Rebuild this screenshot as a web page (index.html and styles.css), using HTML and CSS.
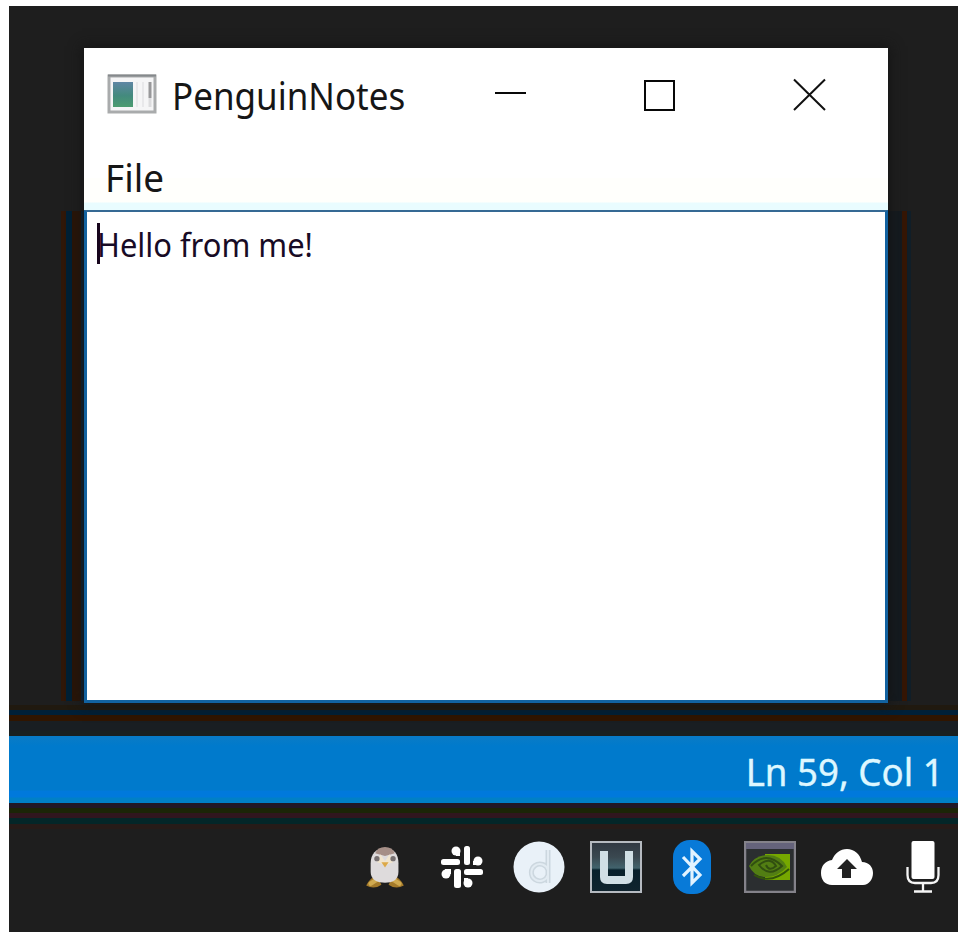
FILE: index.html
```html
<!DOCTYPE html>
<html lang="en">
<head>
<meta charset="utf-8">
<title>PenguinNotes</title>
<link rel="stylesheet" href="styles.css">
</head>
<body>
<main class="desktop">
  <section class="stage">
    <div class="window">
      <header class="titlebar">
        <svg class="app-icon" width="50" height="40" viewBox="0 0 50 40">
          <defs><linearGradient id="pane" x1="0" y1="0" x2="0" y2="1"><stop offset="0" stop-color="#5f86a4"/><stop offset=".55" stop-color="#438a7d"/><stop offset="1" stop-color="#4c9c70"/></linearGradient></defs>
          <rect x="2" y="2" width="46" height="36" fill="#f5f5f6" stroke="#a9abac" stroke-width="3"/>
          <path d="M1 1.500H49" stroke="#85898c" stroke-width="2"/>
          <rect x="6" y="8" width="20" height="25" fill="url(#pane)"/>
          <path d="M30 8V33M36 8V33" stroke="#e8e8ea" stroke-width="2"/>
          <path d="M43 8V24" stroke="#98989a" stroke-width="3"/>
          <path d="M43 24V33" stroke="#dcdcde" stroke-width="3"/>
        </svg>
        <h1 class="title"><span class="title-text">PenguinNotes</span></h1>
        <div class="controls">
          <svg width="34" height="34" viewBox="0 0 34 34"><path d="M1 15H32" stroke="#080808" stroke-width="2"/></svg>
          <svg width="34" height="34" viewBox="0 0 34 34"><rect x="2" y="3" width="29" height="29" fill="none" stroke="#080808" stroke-width="2"/></svg>
          <svg width="34" height="34" viewBox="0 0 34 34"><path d="M2 1.500L33 32M33 1.500L2 32" stroke="#111" stroke-width="2"/></svg>
        </div>
      </header>
      <nav class="menubar"><span class="menu-item">File</span></nav>
      <div class="editor"><i class="caret"></i><span class="note">Hello from me!</span></div>
    </div>
  </section>
  <div class="statusbar"><span class="position">Ln 59, Col 1</span></div>
  <footer class="tray">
    <svg class="penguin" width="40" height="43" viewBox="0 0 44 48">
      <path d="M1 43Q6 33 13 32L18 42Q10 48 1 43ZM43 43Q38 33 31 32L26 42Q34 48 43 43Z" fill="#a47a2a"/>
      <path d="M6 41L12 37M32 37L38 41" stroke="#d0aa50" stroke-width="5" stroke-linecap="round"/>
      <path d="M6 18C6 8 12 1 22 1S37 8 37 18V28C37 37 30 40 22 40S6 37 6 28Z" fill="#dedbdc"/>
      <path d="M11 7Q14 0 22 0T33 7L22 10Z" fill="#a68f87"/>
      <path d="M17 8L22 16L27 8L31 17L23 20L13 17Z" fill="#f1e5ce"/>
      <circle cx="13" cy="13" r="3" fill="#777071"/><circle cx="31" cy="13" r="3" fill="#777071"/>
      <path d="M18 17H26L22 23Z" fill="#dca948"/>
    </svg>
    <svg class="slack" width="42" height="42" viewBox="0 0 42 42" fill="#fff">
      <circle cx="15" cy="5" r="4.500"/><rect x="15" y="3" width="4" height="7"/><rect x="23" y="0" width="6" height="19" rx="2.500"/>
      <rect x="0" y="13" width="19" height="6" rx="2.500"/><circle cx="37" cy="15" r="4.500"/><rect x="32" y="15" width="6" height="4"/>
      <circle cx="5" cy="28" r="4.500"/><rect x="4" y="23" width="6" height="5"/><rect x="23" y="23" width="19" height="6" rx="2.500"/>
      <rect x="13" y="23" width="7" height="19" rx="2.500"/><circle cx="27" cy="37" r="4.500"/><rect x="23" y="32" width="4" height="5"/>
    </svg>
    <svg class="disc" width="52" height="52" viewBox="0 0 52 52"><circle cx="26" cy="26" r="25.500" fill="#e9f1f8"/><path d="M35 9V42M35 34A8.500 8.500 0 1 1 35 29" fill="none" stroke="#ccd7df" stroke-width="5"/><path d="M35 9V42M35 34A8.500 8.500 0 1 1 35 29" fill="none" stroke="#e2ebf2" stroke-width="2"/></svg>
    <svg class="utool" width="52" height="52" viewBox="0 0 52 52">
      <defs><linearGradient id="steel" x1="0" y1="0" x2="0" y2="1"><stop offset="0" stop-color="#303842"/><stop offset=".3" stop-color="#3a4850"/><stop offset=".52" stop-color="#42636d"/><stop offset=".56" stop-color="#07202b"/><stop offset="1" stop-color="#10242e"/></linearGradient></defs>
      <rect x="1" y="1" width="50" height="50" fill="url(#steel)" stroke="#b5bac0" stroke-width="2"/>
      <path d="M14 10V36Q14 39 17 39H36Q39 39 39 36V10" fill="none" stroke="#d0dfe5" stroke-width="8"/>
    </svg>
    <svg class="bluetooth" width="38" height="54" viewBox="0 0 38 54"><rect width="38" height="54" rx="17" fill="#087ad8"/><path d="M10 17L27 35L19 43V11L27 19L10 36" fill="none" stroke="#e2f3ff" stroke-width="3.200"/></svg>
    <svg class="nvidia" width="52" height="52" viewBox="0 0 52 52">
      <rect x="1" y="1" width="50" height="50" fill="#2b2e30" stroke="#84828a" stroke-width="2.500"/><path d="M2 5H50" stroke="#65637b" stroke-width="6"/>
      <rect x="21" y="13" width="25" height="26" fill="#76a800"/>
      <path d="M5 25Q11 14 24 14T43 26Q34 36 22 36T5 25Z" fill="#527e13"/>
      <path d="M7 25Q22 9 38 25Q25 37 15 24Q26 15 32 25Q25 31 22 24" fill="none" stroke="#314f10" stroke-width="2"/>
      <path d="M10 34Q27 44 45 28" fill="none" stroke="#315409" stroke-width="2"/>
    </svg>
    <svg class="cloud" width="52" height="36" viewBox="0 0 52 36"><path d="M11 36C4 36 0 31 0 24S4 12 11 11C14 4 19 0 26 0S39 5 41 13C48 13 52 18 52 24S48 36 42 36Z" fill="#fff"/><path d="M26 10L36 20H30V29H21V20H16Z" fill="#222"/></svg>
    <svg class="mic" width="34" height="52" viewBox="0 0 34 52"><rect x="5.500" y="0" width="23" height="38" rx="2" fill="#fff"/><path d="M1.500 26V34Q1.500 42 9 42H25Q32.500 42 32.500 34V26M17 42V50M8 50.500H26" fill="none" stroke="#f5f5f5" stroke-width="2.300"/></svg>
  </footer>
</main>
</body>
</html>
```
FILE: styles.css
```css
* { box-sizing: border-box; }
body { margin: 0; padding: 6px 9px 5px; background: #fff; font-family: "Noto Sans", sans-serif; }
svg { display: block; flex: none; }
.desktop { height: 926px; background: #1e1e1e; overflow: hidden; }
.stage {
  height: 730px; padding: 42px 70px 0 75px;
  background:
    linear-gradient(#20190f 0 5px, #002038 5px 10px, #301500 10px 16px, #191e22 16px 26px, #192020 26px 31px) 0 699px / 100% 31px no-repeat,
    linear-gradient(90deg, #301708 0 5px, #002035 5px 11px, #2a1507 11px 20px, #07243d 20px) 52px 205px / 24px 490px no-repeat,
    linear-gradient(90deg, #141a1f 0 15px, #351605 15px 20px, #101e28 20px 24px) 878px 205px / 24px 490px no-repeat,
    #1e1e1e;
}
.window { width: 804px; height: 655px; display: flex; flex-direction: column; background: #fff; box-shadow: 0 0 12px 2px #151515; }
.titlebar { height: 98px; display: flex; align-items: center; padding: 0 60px 6px 23px; }
.title { margin: 0 0 0 15px; width: 297px; font-size: 39px; line-height: 54px; font-weight: 400; color: #161616; padding-top: 1px; }
.title-text, .menu-item, .note, .position { display: inline-block; white-space: nowrap; transform-origin: left center; }
.title-text { transform: scaleX(.897); }
.controls { display: flex; gap: 115px; margin: 1px 0 0 25px; }
.menubar { height: 64px; padding: 4px 0 0 21px; font-size: 38px; line-height: 54px; color: #161616; background: linear-gradient(#fff 0 32px, #fffffc 32px 56px, #e9fcff 57px); }
.menu-item { transform: scaleX(.97); }
.editor { flex: 1; display: flex; border: 3px solid #1262a0; border-top: 2px solid #356994; padding: 11px 0 0 10px; background: #fff; }
.caret { width: 3px; height: 41px; background: #17051d; }
.note { margin-left: -3px; height: 41px; font-size: 32px; line-height: 43px; color: #180b25; transform: scaleX(.965); }
.statusbar { height: 67px; background: linear-gradient(#077bc7 0 3px, #007acc 10px 54px, #0079dc 55px 61px, #0080c7 62px); display: flex; align-items: center; justify-content: flex-end; padding-right: 14px; }
.position { font-size: 39px; line-height: 54px; color: #ddf7ff; transform: scaleX(.94); transform-origin: right center; padding-top: 2px; -webkit-text-stroke: .4px #ddf7ff; }
.tray { height: 129px; display: flex; align-items: center; padding: 0 18px 2px 356px; background: linear-gradient(#211827 0 5px, #1b2507 5px 10px, #30161e 10px 15px, #042628 15px 21px, #261b18 21px 26px, #1e1e1e 26px); }
.penguin { margin-top: 4px; }
.slack { margin-left: 36px; }
.disc { margin-left: 30px; }
.utool { margin-left: 25px; }
.bluetooth { margin-left: 31px; }
.nvidia { margin-left: 33px; }
.cloud { margin-left: 25px; }
.mic { margin-left: 33px; }
```
